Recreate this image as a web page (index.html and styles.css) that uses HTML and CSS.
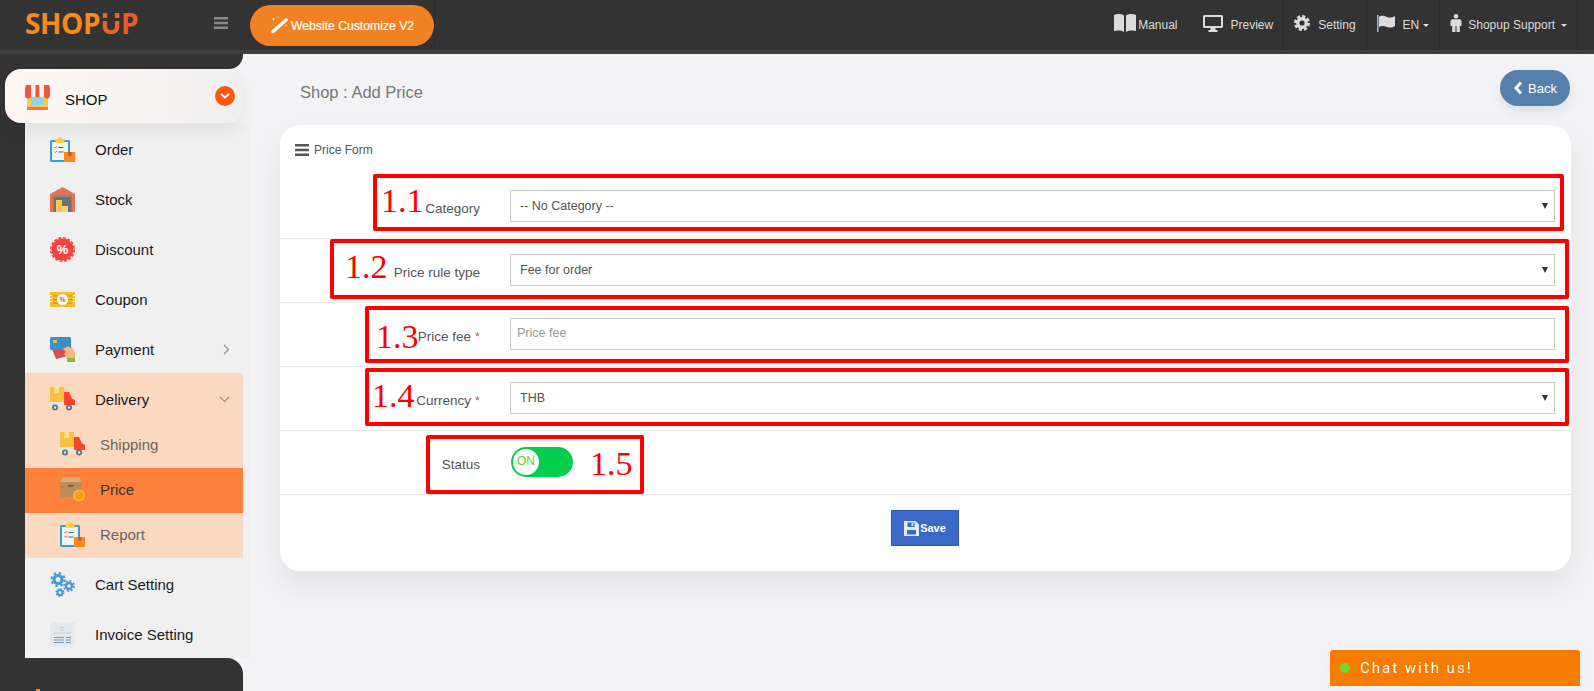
FILE: index.html
```html
<!DOCTYPE html>
<html lang="en">
<head>
  <meta charset="UTF-8" />
  <meta name="viewport" content="width=device-width, initial-scale=1.0"/>
  <title>Shop : Add Price</title>
  <link rel="stylesheet" href="styles.css">
</head>
<body>

<!-- shared colour icons -->
<svg class="defs" aria-hidden="true">
  <symbol id="i-clipboard" viewBox="0 0 25 25">
    <rect x="0" y="3" width="20" height="22" rx="1.500" fill="#3d9bd3"/>
    <rect x="2" y="5" width="16" height="18" fill="#eef3f6"/>
    <rect x="5.500" y="2" width="9" height="4" rx="1" fill="#fdd23c"/>
    <circle cx="10" cy="1.800" r="1.800" fill="#fdd23c"/>
    <path d="M4.500 10l1 1 1.500-1.600M4.500 14.500l1 1 1.500-1.600" fill="none" stroke="#e8503a" stroke-width="1"/>
    <path d="M8.500 10.500h5M8.500 15h5" stroke="#55626c" stroke-width="1.200"/>
    <rect x="14" y="15" width="11" height="10" fill="#fb8a1e"/>
    <rect x="18" y="15" width="3.500" height="4" fill="#e5541e"/>
  </symbol>
  <symbol id="i-truck" viewBox="0 0 25 25">
    <rect x="0" y="0" width="14" height="17" fill="#fdc13f"/>
    <rect x="4.500" y="0" width="4.500" height="6" fill="#fbe28f"/>
    <rect x="0" y="15" width="25" height="5" fill="#dfe7e9"/>
    <path d="M14 5h5l3 6.500 3 1.500v5H14z" fill="#f9442a"/>
    <circle cx="5" cy="20.500" r="3" fill="#65717a"/>
    <circle cx="5" cy="20.500" r="1.200" fill="#dfe7e9"/>
    <circle cx="19" cy="20.500" r="3" fill="#65717a"/>
    <circle cx="19" cy="20.500" r="1.200" fill="#dfe7e9"/>
  </symbol>
</svg>

<header class="topbar">
  <a class="logo">SHOP<span class="logo-u">U</span><span class="logo-p">P</span></a>
  <svg class="burger" width="14" height="12" viewBox="0 0 14 12"><path d="M0 0h14v2.500H0zM0 4.700h14v2.500H0zM0 9.400h14v2.500H0z" fill="#8a8a8a"/></svg>
  <a class="customize">
    <svg width="17" height="17" viewBox="0 0 17 17"><path d="M2 15.500L15 4" stroke="#fff" stroke-width="3.400" stroke-linecap="round"/><path d="M2.500 1l.5 1.500L4.500 3 3 3.500 2.500 5 2 3.500.5 3 2 2.500zM7 0l.3 1 1 .3-1 .3-.3 1-.3-1-1-.3 1-.3zM15 8l.3 1 1 .3-1 .3-.3 1-.3-1-1-.3 1-.3z" fill="#fff"/></svg>
    Website Customize V2
  </a>
  <span class="topbar-rule"></span>

  <nav class="topnav">
    <a class="topnav-item manual">
      <svg width="22" height="18" viewBox="0 0 22 18"><path d="M0 1c3-1.300 7-1.300 10 .5V18C7 16.200 3 16.200 0 17z" fill="#dcdcdc"/><path d="M22 1c-3-1.300-7-1.300-10 .5V18c3-1.800 7-1.800 10-1z" fill="#dcdcdc"/></svg>
      Manual
    </a>
    <a class="topnav-item">
      <svg width="20" height="17" viewBox="0 0 20 17"><path d="M1.500 0h17A1.500 1.500 0 0 1 20 1.500v10a1.500 1.500 0 0 1-1.500 1.500h-6v2h2v2h-9v-2h2v-2h-6A1.500 1.500 0 0 1 0 11.500v-10A1.500 1.500 0 0 1 1.500 0zM2 2v9h16V2z" fill="#dcdcdc"/></svg>
      Preview
    </a>
    <a class="topnav-item">
      <svg width="16" height="16" viewBox="0 0 17 17"><circle cx="8.500" cy="8.500" r="4.500" fill="none" stroke="#dcdcdc" stroke-width="3.500"/><circle cx="8.500" cy="8.500" r="7" fill="none" stroke="#dcdcdc" stroke-width="3" stroke-dasharray="3.300 2.200"/></svg>
      Setting
    </a>
    <a class="topnav-item">
      <svg width="18" height="17" viewBox="0 0 18 17"><rect x="0" y="0" width="1.500" height="17" fill="#9fb4d8"/><path d="M2 2c3-2 5-1 8 0s5 .6 8-1v10c-3 1.600-5 2-8 1s-5-1.500-8 0z" fill="#dcdcdc"/></svg>
      EN<i class="caret"></i>
    </a>
    <a class="topnav-item support">
      <svg width="12" height="18" viewBox="0 0 11 18"><circle cx="5.500" cy="2.300" r="2.300" fill="#dcdcdc"/><path d="M2 5.200h7a2 2 0 0 1 2 2V12H9.300v6H6v-6H5v6H1.700v-6H0V7.200a2 2 0 0 1 2-2z" fill="#dcdcdc"/></svg>
      Shopup Support<i class="caret"></i>
    </a>
  </nav>
</header>

<div class="layout">
  <aside class="sidebar">
    <div class="cap-top"></div>

    <a class="shop-item">
      <svg class="icon" viewBox="0 0 25 25">
        <rect x="2" y="8" width="21" height="17" fill="#fdc94a"/>
        <rect x="2" y="22" width="21" height="3" fill="#f9724a"/>
        <rect x="6" y="12" width="13" height="8" fill="#8fd3f4"/>
        <path d="M1 0h5v10.500a2.500 2.500 0 0 1-6 0V3z" fill="#f2553d"/>
        <path d="M6 0h4.500v10.500a2.500 2.500 0 0 1-4.500 0z" fill="#f4f4f4"/>
        <path d="M10.500 0h4v10.500a2 2 0 0 1-4 0z" fill="#f2553d"/>
        <path d="M14.500 0H19v10.500a2.500 2.500 0 0 1-4.500 0z" fill="#f4f4f4"/>
        <path d="M19 0h5l1 3v7.500a2.500 2.500 0 0 1-6 0z" fill="#f2553d"/>
      </svg>
      <span>SHOP</span>
      <i class="shop-badge"><svg width="10" height="6" viewBox="0 0 10 6"><path d="M1 1l4 3.500L9 1" fill="none" stroke="#fff" stroke-width="1.800"/></svg></i>
    </a>

    <ul class="menu">
      <li class="menu-item"><svg class="icon"><use href="#i-clipboard"/></svg>Order</li>
      <li class="menu-item">
        <svg class="icon" viewBox="0 0 25 25">
          <path d="M0 25V7L12.500 0 25 7v18z" fill="#e9734f"/>
          <rect x="3.500" y="8" width="18" height="17" fill="#6f6f70"/>
          <path d="M3.500 8h18v2h-18z" fill="#8d8d8d"/>
          <rect x="6" y="13" width="6" height="6" fill="#fdc94a"/>
          <rect x="6" y="19" width="6" height="6" fill="#f8c65a"/>
          <rect x="12" y="19" width="6" height="6" fill="#fdd36a"/>
        </svg>Stock</li>
      <li class="menu-item">
        <svg class="icon" viewBox="0 0 25 25">
          <circle cx="12.500" cy="12.500" r="11" fill="#f4433c"/>
          <circle cx="12.500" cy="12.500" r="11.700" fill="none" stroke="#f4433c" stroke-width="1.600" stroke-dasharray="3 1.600"/>
          <text x="12.500" y="17" text-anchor="middle" class="icon-pct">%</text>
        </svg>Discount</li>
      <li class="menu-item">
        <svg class="icon" viewBox="0 0 25 25">
          <path d="M0 5h25v3h-2v1h2v2h-2v1h2v2h-2v1h2v5H0v-5h2v-1H0v-2h2v-1H0V9h2V8H0z" fill="#f2bf2b"/>
          <path d="M3 9h5M3 12.500h5M3 16h5M17 9h5M17 12.500h5M17 16h5" stroke="#de7f1f" stroke-width="1.200"/>
          <circle cx="12.500" cy="12.500" r="5.500" fill="#fff"/>
          <text x="12.500" y="15" text-anchor="middle" class="icon-pct-small">%</text>
        </svg>Coupon</li>
      <li class="menu-item">
        <svg class="icon" viewBox="0 0 25 25">
          <path d="M2 12l14-1 2 8-12 3z" fill="#dc4b4b"/>
          <path d="M17 13l5-3 3 6v6h-8l-3-5z" fill="#fbb77e"/>
          <rect x="0" y="0" width="21" height="13" rx="1.500" fill="#3b8fc9"/>
          <rect x="3" y="3" width="4" height="3" fill="#f8b843"/>
          <path d="M13 12l5-3 4 3-3 6z" fill="#fbb77e"/>
          <rect x="17" y="21" width="8" height="4" fill="#8cb33f"/>
        </svg>Payment<svg class="chev chev-right" width="7" height="11" viewBox="0 0 7 11"><path d="M1 1l4.500 4.500L1 10" fill="none" stroke="#8a8f98" stroke-width="1.200"/></svg></li>

      <li class="menu-group">
        <div class="menu-item"><svg class="icon"><use href="#i-truck"/></svg>Delivery<svg class="chev chev-down" width="11" height="7" viewBox="0 0 11 7"><path d="M1 1l4.500 4.500L10 1" fill="none" stroke="#8a8f98" stroke-width="1.200"/></svg></div>
        <a class="sub-item"><svg class="icon"><use href="#i-truck"/></svg>Shipping</a>
        <a class="sub-item active">
          <svg class="icon" viewBox="0 0 25 25">
            <path d="M3 0h16l3 5v15H0V5z" fill="#b98d5c"/>
            <path d="M0 5l3-5h16l3 5z" fill="#d6ad7c"/>
            <rect x="8" y="8" width="6" height="1.500" fill="#6f5236"/>
            <circle cx="19" cy="18.500" r="6" fill="#fcb92c"/>
            <circle cx="19" cy="18.500" r="4" fill="#f59c1c"/>
          </svg>Price</a>
        <a class="sub-item"><svg class="icon"><use href="#i-clipboard"/></svg>Report</a>
      </li>

      <li class="menu-item">
        <svg class="icon" viewBox="0 0 25 25">
          <g fill="none" stroke="#459ad6">
            <circle cx="8" cy="7.500" r="4" stroke-width="3"/>
            <circle cx="8" cy="7.500" r="6.500" stroke-width="2.200" stroke-dasharray="2.500 2.600"/>
            <circle cx="19" cy="14" r="3" stroke-width="2.400"/>
            <circle cx="19" cy="14" r="5" stroke-width="1.800" stroke-dasharray="2 1.900"/>
            <circle cx="10" cy="20.500" r="2.500" stroke-width="2"/>
            <circle cx="10" cy="20.500" r="3.800" stroke-width="1.400" stroke-dasharray="1.600 1.400"/>
          </g>
        </svg>Cart Setting</li>
      <li class="menu-item">
        <svg class="icon" viewBox="0 0 25 25">
          <rect width="25" height="25" rx="2.500" fill="#e3e9ee"/>
          <path d="M4 11h17" stroke="#c6d0d8"/>
          <path d="M4 15.500h10M4 18h10M4 20.500h10M16 15.500h5M16 18h5M16 20.500h5" stroke="#7d96ab" stroke-width="1.100"/>
          <path d="M10 5h4v1h-4zM10 7.500h4v1h-4z" fill="#c6d0d8"/>
        </svg>Invoice Setting</li>
    </ul>

    <div class="cap-bottom"><i class="cap-peek"></i></div>
  </aside>

  <main class="content">
    <div class="page-head">
      <h1 class="page-title">Shop : Add Price</h1>
      <a class="back-btn">
        <svg width="9" height="14" viewBox="0 0 9 14"><path d="M7 1.500L2 7l5 5.500" fill="none" stroke="#fff" stroke-width="3"/></svg>
        Back
      </a>
    </div>

    <section class="card">
      <div class="card-head">
        <svg width="14" height="12" viewBox="0 0 14 12"><path d="M0 0h14v2.500H0zM0 4.700h14v2.500H0zM0 9.400h14v2.500H0z" fill="#555"/></svg>
        Price Form
      </div>

      <div class="form-row">
        <label class="form-label">Category</label>
        <div class="select"><select class="form-control"><option>-- No Category --</option></select></div>
      </div>
      <div class="form-row">
        <label class="form-label">Price rule type</label>
        <div class="select"><select class="form-control"><option>Fee for order</option></select></div>
      </div>
      <div class="form-row">
        <label class="form-label">Price fee <em>*</em></label>
        <input class="form-control form-input" type="text" placeholder="Price fee">
      </div>
      <div class="form-row">
        <label class="form-label">Currency <em>*</em></label>
        <div class="select"><select class="form-control"><option>THB</option></select></div>
      </div>
      <div class="form-row">
        <label class="form-label">Status</label>
        <div class="toggle"><span class="toggle-knob">ON</span></div>
      </div>

      <div class="form-foot">
        <button class="save-btn" type="button">
          <svg width="15" height="15" viewBox="0 0 15 15"><path d="M0 0h11.500L15 3.500V15H0z" fill="#e4ebf8"/><rect x="3.500" y="1.500" width="7" height="4.500" fill="#3a69c7"/><rect x="7.500" y="2" width="1.800" height="3" fill="#e4ebf8"/><rect x="3" y="9" width="9" height="4.500" fill="#3a69c7"/></svg>
          Save
        </button>
      </div>

      <!-- red annotation frames drawn over the form -->
      <div class="mark mark-1"><span>1.1</span></div>
      <div class="mark mark-2"><span>1.2</span></div>
      <div class="mark mark-3"><span>1.3</span></div>
      <div class="mark mark-4"><span>1.4</span></div>
      <div class="mark mark-5"><span>1.5</span></div>
    </section>
  </main>
</div>

<div class="chat"><i class="chat-dot"></i>Chat with us!</div>

</body>
</html>
```

FILE: styles.css
```css
* {
  box-sizing: border-box;
}
html, body {
  height: 100%;
}
body {
  margin: 0;
  overflow: hidden;
  font-family: "Liberation Sans", Arial, sans-serif;
  background-color: #f3f3f5;
  color: #333;
}
.defs {
  display: none;
}
a {
  color: inherit;
  text-decoration: none;
}

/* top bar */
.topbar {
  height: 54px;
  display: flex;
  align-items: flex-start;
  background-color: #333;
  border-bottom: 4px solid #3f3f3f;
}
.logo {
  width: 192px;
  margin: 5px 0 0 25px;
  font-family: "Open Sans", sans-serif;
  font-size: 28px;
  font-weight: 700;
  line-height: 36px;
  letter-spacing: -0.4px;
  color: #f98a1a;
}
.logo-u {
  position: relative;
  color: #f0602a;
}
/* splits the U into two dots and a smile */
.logo-u::after {
  content: "";
  position: absolute;
  left: 0;
  right: 0;
  top: 14px;
  height: 3px;
  background-color: #333;
}
.logo-p {
  color: #ee5a2a;
}
.burger {
  margin: 17px 0 0 -3px;
}
.customize {
  display: flex;
  align-items: center;
  gap: 3px;
  width: 184px;
  height: 41px;
  margin: 5px 0 0 22px;
  padding-left: 21px;
  border-radius: 21px;
  background-color: #f28123;
  color: #fff;
  font-size: 12.200px;
  -webkit-text-stroke: 0.2px #fff;
}
.customize svg {
  margin-top: -2px;
}
.topbar-rule {
  width: 1px;
  height: 45px;
  background-color: #2a2a2a;
}
.topnav {
  display: flex;
  margin-left: auto;
  margin-right: 16px;
  height: 50px;
}
.topnav-item {
  display: flex;
  align-items: center;
  gap: 8px;
  padding: 0 10px;
  border-right: 1px solid #2a2a2a;
  color: #dcdcdc;
  font-size: 12px;
}
.topnav-item.manual {
  gap: 2px;
  padding: 0 15px 0 0;
  border-right: 0;
}
.topnav-item.support {
  gap: 6px;
}
.topnav-item svg {
  margin-top: -4px;
}
.caret {
  display: inline-block;
  margin-left: -4px;
  border-top: 3px solid #dcdcdc;
  border-left: 3px solid transparent;
  border-right: 3px solid transparent;
}
.support .caret {
  margin-left: 0;
}

/* sidebar */
.layout {
  display: flex;
  height: calc(100% - 54px);
}
.sidebar {
  width: 251px;
  flex: none;
  display: flex;
  flex-direction: column;
  background: linear-gradient(to right, #333 25px, transparent 25px);
}
.cap-top {
  width: 243px;
  height: 15px;
  background-color: #333;
  border-bottom-right-radius: 14px;
}
.shop-item {
  position: relative;
  z-index: 1;
  display: flex;
  align-items: center;
  gap: 15px;
  width: 238px;
  height: 54px;
  margin-left: 5px;
  padding: 6px 0 0 20px;
  border-radius: 16px;
  background: linear-gradient(to right, #fff8f5, #f0efef);
  box-shadow: 0 8px 16px rgba(0, 0, 0, 0.06);
  color: #111;
  font-size: 15px;
}
.icon {
  width: 25px;
  height: 25px;
  flex: none;
}
.icon-pct {
  fill: #fff;
  font-size: 13px;
  font-weight: bold;
}
.icon-pct-small {
  fill: #e2453a;
  font-size: 7px;
  font-weight: bold;
}
.shop-item .icon {
  margin-top: -3px;
}
.shop-badge {
  display: flex;
  align-items: center;
  justify-content: center;
  width: 20px;
  height: 20px;
  margin: -7px 8px 0 auto;
  border-radius: 50%;
  background-color: #fa5a0f;
}
.menu {
  list-style: none;
  margin: 0 0 0 25px;
  padding: 0;
  width: 226px;
  height: 535px;
  background-color: #f0f0f0;
  border-bottom-left-radius: 20px;
}
.menu-item {
  display: flex;
  align-items: center;
  gap: 20px;
  height: 50px;
  padding: 3px 11px 0 25px;
  color: #1a1a24;
  font-size: 15px;
}
.chev {
  margin-left: auto;
}
.chev-right {
  margin-right: 10px;
}
.chev-down {
  margin-right: 2px;
}
.menu-group {
  width: 218px;
  background-color: #fbd9c0;
}
.sub-item {
  display: flex;
  align-items: center;
  gap: 15px;
  height: 45px;
  padding: 0 0 2px 35px;
  color: #666;
  font-size: 15px;
}
.sub-item.active {
  background-color: #fd813b;
  color: #333;
}
.cap-bottom {
  width: 243px;
  flex: 1;
  padding-top: 31px;
  padding-left: 36px;
  background-color: #333;
  border-top-right-radius: 16px;
}
.cap-peek {
  display: block;
  width: 4px;
  height: 2px;
  background-color: #f5852a;
}

/* page */
.content {
  flex: 1;
  padding: 16px 23px 0 29px;
}
.page-head {
  display: flex;
  justify-content: space-between;
  height: 55px;
}
.page-title {
  margin: 13px 0 0 20px;
  color: #777;
  font-size: 16.500px;
  font-weight: normal;
  line-height: 18px;
}
.back-btn {
  display: flex;
  align-items: center;
  gap: 5px;
  width: 70px;
  height: 36px;
  padding-left: 14px;
  margin-right: 1px;
  border-radius: 18px;
  background-color: #5580ab;
  box-shadow: 0 6px 12px rgba(0, 0, 0, 0.08);
  color: #fff;
  font-size: 13px;
}
.card {
  position: relative;
  height: 446px;
  background-color: #fff;
  border-radius: 20px;
  box-shadow: 0 15px 30px rgba(0, 0, 0, 0.07);
}
.card-head {
  display: flex;
  align-items: center;
  gap: 5px;
  height: 50px;
  padding: 0 0 0 15px;
  color: #555;
  font-size: 12px;
}
.form-row {
  display: flex;
  align-items: flex-start;
  gap: 30px;
  height: 64px;
  padding: 15px 16px 0 0;
  border-bottom: 1px solid #e9e9e9;
}
.form-label {
  width: 200px;
  flex: none;
  padding-top: 10px;
  color: #555;
  font-size: 13.500px;
  line-height: 18px;
  text-align: right;
}
.form-label em {
  color: #e25555;
  font-style: normal;
}
.select {
  position: relative;
  flex: 1;
}
.select::after {
  content: "";
  position: absolute;
  right: 7px;
  top: 13px;
  border-top: 6px solid #333;
  border-left: 3.500px solid transparent;
  border-right: 3.500px solid transparent;
}
.form-control {
  display: block;
  width: 100%;
  height: 32px;
  padding: 0 0 0 9px;
  appearance: none;
  background-color: #fff;
  border: 1px solid #c8c8c8;
  border-radius: 0;
  color: #555;
  font-family: inherit;
  font-size: 12.500px;
}
.form-input {
  flex: 1;
  width: auto;
  padding: 0 6px 2px;
}
.form-control::placeholder {
  color: #999;
}
.toggle {
  width: 62px;
  height: 30px;
  margin: 1px 0 0 1px;
  padding: 2px;
  border-radius: 15px;
  background-color: #03cf4c;
}
.toggle-knob {
  display: block;
  width: 26px;
  height: 26px;
  border-radius: 50%;
  background-color: #fff;
  color: #6fcf2c;
  font-size: 12px;
  line-height: 24px;
  text-align: center;
}
.form-foot {
  display: flex;
  justify-content: center;
  padding: 15px 1px 0 0;
}
.save-btn {
  display: flex;
  align-items: center;
  justify-content: center;
  gap: 1px;
  width: 68px;
  height: 36px;
  padding: 0;
  background-color: #3a69c7;
  border: 1px solid #2f5ab0;
  color: #fff;
  font-family: inherit;
  font-size: 11px;
  font-weight: bold;
}

/* annotation frames */
.mark {
  position: absolute;
  border: 4px solid #f00;
  border-radius: 2px;
  pointer-events: none;
}
.mark span {
  position: absolute;
  color: #f00;
  font-family: "Liberation Serif", serif;
  font-size: 34px;
  line-height: 40px;
}
.mark-1 { left: 93px; top: 49px; width: 1191px; height: 57px; }
.mark-1 span { left: 4px; top: 3px; }
.mark-2 { left: 50px; top: 114px; width: 1239px; height: 60px; }
.mark-2 span { left: 11px; top: 4px; }
.mark-3 { left: 85px; top: 181px; width: 1204px; height: 57px; }
.mark-3 span { left: 7px; top: 7px; }
.mark-4 { left: 85px; top: 243px; width: 1204px; height: 58px; }
.mark-4 span { left: 3px; top: 4px; }
.mark-5 { left: 146px; top: 310px; width: 218px; height: 59px; }
.mark-5 span { left: 160px; top: 5px; }

/* chat */
.chat {
  position: fixed;
  right: 14px;
  bottom: 5px;
  display: flex;
  align-items: center;
  gap: 10px;
  width: 250px;
  height: 36px;
  padding-left: 10px;
  border-radius: 3px 3px 0 0;
  background-color: #f77c02;
  box-shadow: 0 0 20px rgba(0, 0, 0, 0.03);
  color: #fff;
  font-family: Roboto, sans-serif;
  font-size: 15px;
  letter-spacing: 2px;
}
.chat-dot {
  width: 10px;
  height: 10px;
  border-radius: 50%;
  background-color: #6fd92e;
}
```
